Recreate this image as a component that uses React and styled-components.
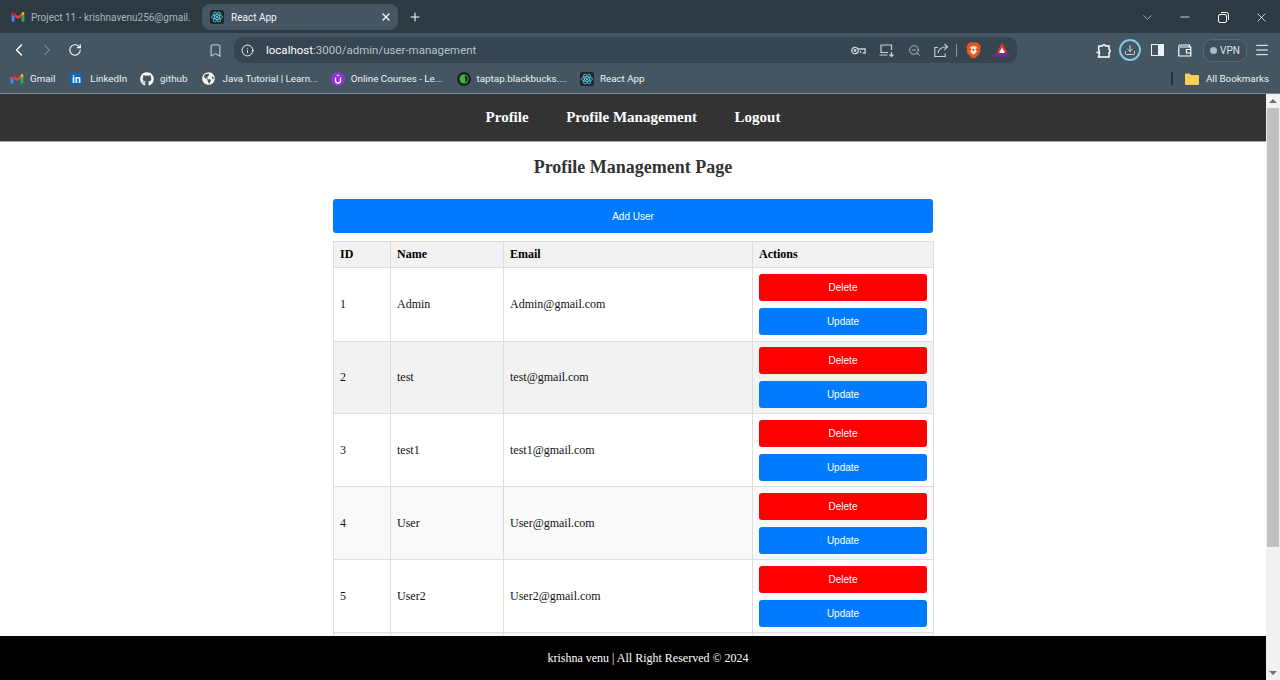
import React from "react";
import styled, { createGlobalStyle } from "styled-components";
import {
  ChevronLeft,
  ChevronRight,
  RotateCw,
  Bookmark,
  Info,
  X,
  Plus,
  ChevronDown,
  Minus,
  ZoomOut,
  Download,
  Menu,
} from "lucide-react";
import { FaGithub, FaGlobeAmericas } from "react-icons/fa";

const GlobalStyle = createGlobalStyle`
  html, body {
    margin: 0;
    height: 100%;
    overflow: hidden;
    background: #fff;
  }
  * { box-sizing: border-box; }
`;

const users = [
  { id: 1, name: "Admin", email: "Admin@gmail.com", bg: "#fff", height: 74 },
  { id: 2, name: "test", email: "test@gmail.com", bg: "#f2f2f2", height: 72 },
  { id: 3, name: "test1", email: "test1@gmail.com", bg: "#fff", height: 73 },
  { id: 4, name: "User", email: "User@gmail.com", bg: "#f9f9f9", height: 73 },
  { id: 5, name: "User2", email: "User2@gmail.com", bg: "#fff", height: 73 },
];

const GmailIcon = ({ size = 14 }) => (
  <svg width={size} height={size} viewBox="0 0 24 18">
    <path d="M1 17V4l5 4v9H3a2 2 0 0 1-2-2z" fill="#4285f4" />
    <path d="M18 17V8l5-4v11a2 2 0 0 1-2 2z" fill="#34a853" />
    <path d="M18 3v5l5-4V3c0-2-2-3-3.500-2z" fill="#fbbc04" />
    <path d="M6 8V3l6 4.500L18 3v5l-6 4.500z" fill="#ea4335" />
    <path d="M1 3v1l5 4V3L4.500 1C3 0 1 1 1 3z" fill="#c5221f" />
  </svg>
);

const ReactIcon = () => (
  <svg width="14" height="14" viewBox="0 0 28 28">
    <rect width="28" height="28" rx="4" fill="#20272b" />
    <g fill="none" stroke="#61dafb" strokeWidth="1.500">
      <ellipse cx="14" cy="14" rx="11" ry="4.500" />
      <ellipse cx="14" cy="14" rx="11" ry="4.500" transform="rotate(60 14 14)" />
      <ellipse cx="14" cy="14" rx="11" ry="4.500" transform="rotate(120 14 14)" />
    </g>
    <circle cx="14" cy="14" r="2.200" fill="#61dafb" />
  </svg>
);

const CourseIcon = () => (
  <svg width="14" height="14" viewBox="0 0 14 14">
    <circle cx="7" cy="7" r="7" fill="#9333d6" />
    <path d="M4.500 5.500v3a2.500 2.500 0 0 0 5 0v-3" fill="none" stroke="#fff" strokeWidth="1.300" />
    <path d="M7 2.500l2 1.200H5z" fill="#fff" />
  </svg>
);

const TapIcon = () => (
  <svg width="14" height="14" viewBox="0 0 14 14">
    <circle cx="7" cy="7" r="7" fill="#1b2320" />
    <circle cx="7" cy="7" r="4.500" fill="#46b04a" />
    <path d="M7.500 4a3 3 0 0 1 0 6c1-1 1.500-1.800 1-3s-.5-2-1-3z" fill="#0d1512" />
  </svg>
);

const BraveIcon = () => (
  <svg width="15" height="17" viewBox="0 0 15 17">
    <path d="M3.500 0.500h8L14.500 4l-.5 6.500-4 5-2.500 1-2.500-1-4-5L.500 4z" fill="#e8581c" />
    <path d="M4 5l3.500-1L11 5l-1.500 3L11 9.500 7.500 13 4 9.500 5.500 8z" fill="#fff" opacity="0.9" />
    <path d="M6 7h3L7.500 9.500z" fill="#e8581c" />
  </svg>
);

const AttentionIcon = () => (
  <svg width="16" height="14" viewBox="0 0 16 14">
    <path d="M8 0l8 14H0z" fill="#e6362e" />
    <path d="M0 14l3-5h10l3 5z" fill="#6b2d8e" />
    <path d="M8 4.500L11 10H5z" fill="#fff" />
  </svg>
);

const FolderIcon = () => (
  <svg width="14" height="12" viewBox="0 0 14 12">
    <path d="M0 1.500A1 1 0 0 1 1 .5h3.500L6 2h7a1 1 0 0 1 1 1v8a1 1 0 0 1-1 1H1a1 1 0 0 1-1-1z" fill="#f5cf57" />
  </svg>
);

const SidePanelIcon = () => (
  <svg width="13" height="12" viewBox="0 0 13 12">
    <rect x="0.500" y="0.500" width="12" height="11" fill="none" stroke="#eef2f4" />
    <rect x="7" y="0.500" width="5.500" height="11" fill="#eef2f4" />
  </svg>
);

const RestoreIcon = () => (
  <svg width="11" height="11" viewBox="0 0 11 11" fill="none" stroke="#fff" strokeWidth="1">
    <rect x="0.500" y="2.500" width="8" height="8" rx="1.500" />
    <path d="M3 .5h5.500a2 2 0 0 1 2 2V8" />
  </svg>
);

const PasswordKeyIcon = () => (
  <svg width="15" height="9" viewBox="0 0 15 9" fill="none" stroke="#c7d0d5" strokeWidth="1.300">
    <circle cx="4" cy="4.500" r="3.200" />
    <circle cx="4" cy="4.500" r="0.800" fill="#c7d0d5" />
    <path d="M7.200 3h7v4h-2.500M9.500 7V5" />
  </svg>
);

const CastIcon = () => (
  <svg width="15" height="13" viewBox="0 0 15 13" fill="none" stroke="#c7d0d5" strokeWidth="1.200">
    <path d="M9 8.500H2V1h10.500v5" />
    <path d="M.5 11h8M12.500 8v4.500M10.500 10.500l2 2 2-2" />
  </svg>
);

const ShareIcon = () => (
  <svg width="15" height="14" viewBox="0 0 15 14" fill="none" stroke="#c7d0d5" strokeWidth="1.100">
    <path d="M4 4.500H.8v9h10.400v-3" />
    <path d="M4 10c.6-4 3.800-6.200 9-6.200M10.200.8l3.500 3-3.500 3" />
  </svg>
);

const ExtensionIcon = () => (
  <svg width="16" height="15" viewBox="0 0 16 15" fill="none" stroke="#fff" strokeWidth="1.500">
    <path d="M3 3h3.300a1.800 1.800 0 0 1 3.400 0H13v3.200a1.800 1.800 0 0 1 0 3.400V14H2.500l1-3.300L1.800 9.500h1.700l-1-4z" />
  </svg>
);

const WalletIcon = () => (
  <svg width="14" height="13" viewBox="0 0 14 13" fill="none" stroke="#fff" strokeWidth="1.200">
    <path d="M.8 2.500A1.500 1.500 0 0 1 2.300 1h9.200v2" />
    <path d="M.8 2.500V12h12V3H2" />
    <path d="M13 5.500H8.500v3.500H13" />
  </svg>
);

const LinkedInMark = styled.span`
  width: 12px;
  height: 12px;
  border-radius: 2px;
  background: #0a66c2;
  color: #fff;
  font-family: "Liberation Sans", sans-serif;
  font-size: 10px;
  font-weight: 700;
  line-height: 13px;
  text-align: center;
`;

const bookmarks = [
  { label: "Gmail", icon: <GmailIcon />, gap: 0, inner: 6 },
  { label: "LinkedIn", icon: <LinkedInMark>in</LinkedInMark>, gap: 15, inner: 8 },
  { label: "github", icon: <FaGithub size={14} color="#fff" />, gap: 13, inner: 6 },
  { label: "Java Tutorial | Learn...", icon: <FaGlobeAmericas size={13} color="#f1f3f4" />, gap: 15, inner: 7 },
  { label: "Online Courses - Le...", icon: <CourseIcon />, gap: 13, inner: 6 },
  { label: "taptap.blackbucks....", icon: <TapIcon />, gap: 14, inner: 6 },
  { label: "React App", icon: <ReactIcon />, gap: 13, inner: 6 },
];

export default function App() {
  return (
    <>
      <GlobalStyle />
      <Window>
        <TabStrip>
          <InactiveTab>
            <GmailIcon />
            <TabTitle $faded>Project 11 - krishnavenu256@gmail.</TabTitle>
          </InactiveTab>
          <ActiveTab>
            <ReactIcon />
            <TabTitle>React App</TabTitle>
            <X size={12} color="#fff" strokeWidth={2.500} />
          </ActiveTab>
          <NewTab>
            <Plus size={14} color="#fff" strokeWidth={1.800} />
          </NewTab>
          <WindowControls>
            <WindowButton>
              <ChevronDown size={15} color="#c3ccd1" strokeWidth={1.200} />
            </WindowButton>
            <WindowButton>
              <Minus size={14} color="#fff" strokeWidth={1.300} />
            </WindowButton>
            <WindowButton>
              <RestoreIcon />
            </WindowButton>
            <WindowButton>
              <X size={15} color="#fff" strokeWidth={1.200} />
            </WindowButton>
          </WindowControls>
        </TabStrip>

        <Toolbar>
          <NavButtons>
            <ChevronLeft size={20} color="#fff" strokeWidth={1.700} />
            <ChevronRight size={18} color="#77878f" strokeWidth={1.500} />
            <RotateCw size={14} color="#fff" strokeWidth={1.900} />
          </NavButtons>
          <Bookmark size={15} color="#e6ebee" strokeWidth={1.400} />
          <AddressBar>
            <Info size={13} color="#fff" strokeWidth={1.700} />
            <Url>
              <strong>localhost</strong>:3000/admin/user-management
            </Url>
            <AddressIcons>
              <PasswordKeyIcon />
              <CastIcon />
              <ZoomOut size={13} color="#c7d0d5" strokeWidth={1.500} />
              <ShareIcon />
            </AddressIcons>
            <AddressDivider />
            <BraveIcon />
            <AttentionIcon />
          </AddressBar>
          <ToolbarIcons>
            <ToolSlot $w={26}>
              <ExtensionIcon />
            </ToolSlot>
            <ToolSlot $w={26}>
              <DownloadRing>
                <Download size={12} color="#fff" strokeWidth={1.500} />
              </DownloadRing>
            </ToolSlot>
            <ToolSlot $w={28}>
              <SidePanelIcon />
            </ToolSlot>
            <ToolSlot $w={28}>
              <WalletIcon />
            </ToolSlot>
            <VpnPill>
              <VpnDot />
              VPN
            </VpnPill>
            <ToolSlot $w={30}>
              <Menu size={16} color="#fff" strokeWidth={1.500} />
            </ToolSlot>
          </ToolbarIcons>
        </Toolbar>

        <BookmarksBar>
          {bookmarks.map((b) => (
            <BookmarkItem key={b.label} $gap={b.gap} $inner={b.inner}>
              {b.icon}
              <span>{b.label}</span>
            </BookmarkItem>
          ))}
          <AllBookmarks>
            <BarDivider />
            <FolderIcon />
            <span>All Bookmarks</span>
          </AllBookmarks>
        </BookmarksBar>

        <Viewport>
          <Page>
            <Nav>
              <NavLink>Profile</NavLink>
              <NavLink>Profile Management</NavLink>
              <NavLink>Logout</NavLink>
            </Nav>
            <Content>
              <Title>Profile Management Page</Title>
              <AddButton>Add User</AddButton>
              <Table>
                <colgroup>
                  <col width="57" />
                  <col width="113" />
                  <col width="249" />
                  <col width="181" />
                </colgroup>
                <thead>
                  <tr>
                    <Th>ID</Th>
                    <Th>Name</Th>
                    <Th>Email</Th>
                    <Th>Actions</Th>
                  </tr>
                </thead>
                <tbody>
                  {users.map((u) => (
                    <Row key={u.id} $bg={u.bg} $height={u.height}>
                      <Td>{u.id}</Td>
                      <Td>{u.name}</Td>
                      <Td>{u.email}</Td>
                      <Td>
                        <ActionButton $bg="#ff0000">Delete</ActionButton>
                        <ActionButton $bg="#007bff">Update</ActionButton>
                      </Td>
                    </Row>
                  ))}
                  {/* next row only peeks out above the footer */}
                  <Row $bg="#f9f9f9" $height={20}>
                    <Td />
                    <Td />
                    <Td />
                    <Td />
                  </Row>
                </tbody>
              </Table>
            </Content>
            <Footer>krishna venu | All Right Reserved © 2024</Footer>
          </Page>
          <Scrollbar>
            <ScrollArrow />
            <ScrollThumb />
            <ScrollArrow $down />
          </Scrollbar>
        </Viewport>
      </Window>
    </>
  );
}

const Window = styled.div`
  width: 1280px;
  height: 680px;
  display: flex;
  flex-direction: column;
  overflow: hidden;
  font-family: Roboto, "Liberation Sans", sans-serif;
`;

const TabStrip = styled.div`
  height: 33px;
  flex: none;
  background: #2e3a41;
  display: flex;
  align-items: flex-start;
  padding: 4px 0 0 11px;
`;

const InactiveTab = styled.div`
  width: 181px;
  height: 26px;
  display: flex;
  align-items: center;
  gap: 6px;
  overflow: hidden;
`;

const ActiveTab = styled.div`
  width: 196px;
  height: 26px;
  margin-left: 10px;
  padding: 0 6px 0 8px;
  background: #435661;
  border-radius: 8px;
  display: flex;
  align-items: center;
  gap: 7px;
`;

const TabTitle = styled.span`
  flex: 1;
  font-size: 10px;
  white-space: nowrap;
  overflow: hidden;
  color: ${(props) => (props.$faded ? "#aab5bb" : "#f2f5f6")};
`;

const NewTab = styled.div`
  width: 34px;
  height: 26px;
  display: flex;
  align-items: center;
  justify-content: center;
`;

const WindowControls = styled.div`
  margin-left: auto;
  height: 26px;
  display: flex;
  align-items: center;
`;

const WindowButton = styled.div`
  width: 38px;
  display: flex;
  justify-content: center;
`;

const Toolbar = styled.div`
  height: 33px;
  flex: none;
  background: #435661;
  display: flex;
  align-items: center;
  padding-top: 1px;
`;

const NavButtons = styled.div`
  width: 208px;
  padding-left: 9px;
  display: flex;
  align-items: center;
  gap: 9px;
  svg:last-child {
    margin-left: 3px;
  }
`;

const AddressBar = styled.div`
  width: 783px;
  height: 26px;
  margin-left: 11px;
  padding: 0 7px;
  background: #36454f;
  border-radius: 9px;
  display: flex;
  align-items: center;
`;

const Url = styled.div`
  flex: 1;
  margin-left: 12px;
  font-size: 11.500px;
  color: #b6c2c9;
  strong {
    font-weight: 400;
    color: #fff;
  }
`;

const AddressIcons = styled.div`
  width: 98px;
  display: flex;
  align-items: center;
  justify-content: space-between;
`;

const AddressDivider = styled.div`
  width: 1px;
  height: 13px;
  margin: 0 9px 0 7px;
  background: #8a989f;
  & + svg {
    margin-right: 13px;
  }
`;

const ToolbarIcons = styled.div`
  flex: 1;
  padding-left: 74px;
  display: flex;
  align-items: center;
`;

const ToolSlot = styled.div`
  width: ${(props) => props.$w}px;
  flex: none;
  display: flex;
  align-items: center;
  justify-content: center;
`;

const DownloadRing = styled.div`
  width: 22px;
  height: 22px;
  flex: none;
  border-radius: 50%;
  border: 2px solid #7fcbe0;
  display: flex;
  align-items: center;
  justify-content: center;
`;

const VpnPill = styled.div`
  width: 44px;
  height: 23px;
  margin-left: 4px;
  flex: none;
  border: 1px solid #566a75;
  border-radius: 9px;
  background: #3d4f5a;
  font-size: 10px;
  color: #dfe5e8;
  display: flex;
  align-items: center;
  justify-content: center;
  gap: 3px;
`;

const VpnDot = styled.span`
  width: 7px;
  height: 7px;
  border-radius: 50%;
  background: #aeb9bf;
`;

const BookmarksBar = styled.div`
  height: 28px;
  flex: none;
  background: #435661;
  border-bottom: 1px solid #7c8a92;
  display: flex;
  align-items: center;
  padding: 0 11px 2px 10px;
`;

const BookmarkItem = styled.div`
  margin-left: ${(props) => props.$gap}px;
  display: flex;
  align-items: center;
  gap: ${(props) => props.$inner}px;
  font-size: 9.800px;
  color: #eef2f4;
  white-space: nowrap;
`;

const AllBookmarks = styled.div`
  margin-left: auto;
  display: flex;
  align-items: center;
  font-size: 9.800px;
  color: #eef2f4;
  span {
    margin-left: 7px;
  }
`;

const BarDivider = styled.div`
  width: 2px;
  height: 13px;
  margin-right: 12px;
  background: #25313a;
`;

const Viewport = styled.div`
  flex: 1;
  min-height: 0;
  display: flex;
`;

const Page = styled.div`
  position: relative;
  flex: 1;
  min-width: 0;
  overflow: hidden;
  font-family: "Liberation Serif", serif;
  color: #111;
`;

const Nav = styled.nav`
  height: 48px;
  background: #333;
  border-bottom: 1px solid #a6a6a6;
  display: flex;
  align-items: center;
  justify-content: center;
  gap: 37.500px;
`;

const NavLink = styled.a`
  color: #fff;
  font-size: 15px;
  font-weight: 700;
`;

const Content = styled.div`
  width: 600px;
  margin-left: 333px;
`;

const Title = styled.h1`
  margin: 0;
  padding-top: 15px;
  height: 57px;
  text-align: center;
  font-size: 18px;
  line-height: 21px;
  font-weight: 700;
  color: #333;
`;

const AddButton = styled.button`
  display: block;
  width: 100%;
  height: 34px;
  border: none;
  border-radius: 3px;
  background: #007bff;
  color: #fff;
  font-family: "Liberation Sans", sans-serif;
  font-size: 10px;
`;

const Table = styled.table`
  width: 600px;
  margin-top: 8px;
  border-collapse: collapse;
  table-layout: fixed;
  font-size: 12px;
`;

const Th = styled.th`
  height: 26px;
  padding: 0 6px;
  text-align: left;
  font-size: 12px;
  font-weight: 700;
  color: #000;
  background: #f2f2f2;
  border: 1px solid #ddd;
`;

const Row = styled.tr`
  height: ${(props) => props.$height}px;
  background: ${(props) => props.$bg};
`;

const Td = styled.td`
  padding: 0 6px;
  border: 1px solid #ddd;
`;

const ActionButton = styled.button`
  display: block;
  width: 168px;
  height: 27px;
  border: none;
  border-radius: 3px;
  background: ${(props) => props.$bg};
  color: #fff;
  font-family: "Liberation Sans", sans-serif;
  font-size: 10px;
  & + & {
    margin-top: 7px;
  }
`;

const Footer = styled.footer`
  position: absolute;
  left: 0;
  right: 0;
  bottom: 0;
  height: 44px;
  padding-left: 30px;
  background: #000;
  color: #fff;
  font-size: 12px;
  display: flex;
  align-items: center;
  justify-content: center;
`;

const Scrollbar = styled.div`
  width: 14px;
  flex: none;
  background: #f1f1f1;
  display: flex;
  flex-direction: column;
`;

const ScrollArrow = styled.div`
  height: 14px;
  flex: none;
  margin-top: ${(props) => (props.$down ? "auto" : "0")};
  display: flex;
  align-items: center;
  justify-content: center;
  &::after {
    content: "";
    border-left: 4px solid transparent;
    border-right: 4px solid transparent;
    border-${(props) => (props.$down ? "top" : "bottom")}: 4px solid #6f6f6f;
  }
`;

const ScrollThumb = styled.div`
  height: 439px;
  margin: 0 1px;
  background: #c1c1c1;
`;
